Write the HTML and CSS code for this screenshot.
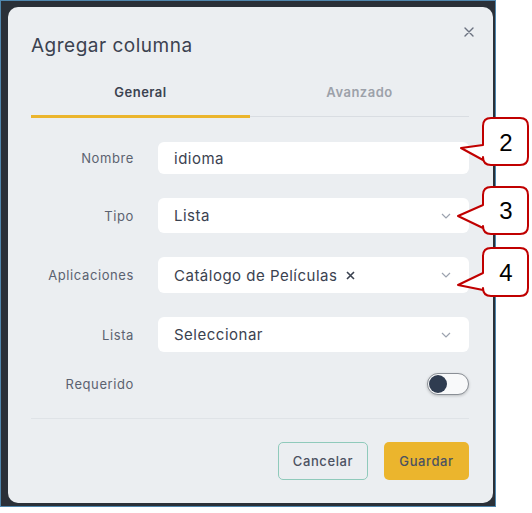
FILE: index.html
```html
<!DOCTYPE html>
<html lang="es">
<head>
<meta charset="utf-8">
<title>Agregar columna</title>
<link rel="stylesheet" href="styles.css">
</head>
<body>
<div class="screen">
  <div class="modal">
    <div class="modal-head">
      <h1 class="title">Agregar columna</h1>
      <button class="close" aria-label="Cerrar">
        <svg width="10" height="10" viewBox="0 0 10 10"><path d="M1 1L9 9M9 1L1 9" stroke="#6b7280" stroke-width="1.4" stroke-linecap="round"/></svg>
      </button>
    </div>
    <div class="tabs">
      <div class="tab active">General</div>
      <div class="tab">Avanzado</div>
    </div>
    <div class="form">
      <label class="label">Nombre</label>
      <div class="field input">idioma</div>

      <label class="label">Tipo</label>
      <div class="field select">Lista
        <svg class="chev" width="10" height="6" viewBox="0 0 10 6"><path d="M1 1L5 5L9 1" fill="none" stroke="#9ca3af" stroke-width="1.2"/></svg>
      </div>

      <label class="label">Aplicaciones</label>
      <div class="field select tall">
        <span class="tag">Catálogo de Películas <svg class="tag-x" width="9" height="9" viewBox="0 0 9 9"><path d="M1 1L8 8M8 1L1 8" stroke="#3b4250" stroke-width="1.6"/></svg></span>
        <svg class="chev" width="10" height="6" viewBox="0 0 10 6"><path d="M1 1L5 5L9 1" fill="none" stroke="#9ca3af" stroke-width="1.2"/></svg>
      </div>

      <label class="label">Lista</label>
      <div class="field select">Seleccionar
        <svg class="chev" width="10" height="6" viewBox="0 0 10 6"><path d="M1 1L5 5L9 1" fill="none" stroke="#9ca3af" stroke-width="1.2"/></svg>
      </div>

      <label class="label last">Requerido</label>
      <div class="toggle-cell last"><span class="toggle"><span class="knob"></span></span></div>
    </div>
    <div class="divider"></div>
    <div class="actions">
      <button class="btn btn-outline">Cancelar</button>
      <button class="btn btn-primary">Guardar</button>
    </div>
  </div>
</div>
<svg class="callouts" width="532" height="513" viewBox="0 0 532 513">
  <g fill="#fff" stroke="#c00000" stroke-width="2" stroke-linejoin="round">
    <path d="M491 118 H520 Q528 118 528 126 V157 Q528 165 520 165 H491 Q483 165 483 157 V160 L461 148 L483 145 V126 Q483 118 491 118 Z"/>
    <path d="M491 187 H520 Q528 187 528 195 V226 Q528 234 520 234 H491 Q483 234 483 226 V228 L458 216 L483 205 V195 Q483 187 491 187 Z"/>
    <path d="M491 248 H520 Q528 248 528 256 V288 Q528 296 520 296 H491 Q483 296 483 288 V290 L458 285 L483 273 V256 Q483 248 491 248 Z"/>
  </g>
  <g font-family="Liberation Sans, Arial, sans-serif" font-size="24" fill="#000" text-anchor="middle">
    <text x="506" y="151">2</text>
    <text x="506" y="219">3</text>
    <text x="506" y="281">4</text>
  </g>
</svg>
</body>
</html>
```

FILE: styles.css
```css
* { box-sizing: border-box; }
html, body { margin: 0; padding: 0; background: #ffffff; }
body {
  width: 532px;
  height: 513px;
  position: relative;
  font-family: "Inter", "Open Sans", sans-serif;
  overflow: hidden;
}
.screen {
  width: 496px;
  height: 507px;
  border: 1px solid #4f86ad;
  background: #2a3038;
  padding: 6px 2px 3px 7px;
}
.modal {
  width: 485px;
  height: 496px;
  background: #ebeef1;
  border-radius: 10px;
  padding: 24px 24px 0 23px;
  display: flex;
  flex-direction: column;
}
.modal-head {
  display: flex;
  justify-content: space-between;
  align-items: flex-start;
  height: 34px;
}
.title {
  margin: 3px 0 0 0;
  font-size: 19px;
  line-height: 24px;
  font-weight: 400;
  color: #3b4250;
  letter-spacing: 0.5px;
}
.close {
  border: 0;
  background: none;
  padding: 0;
  margin: -5px -6px 0 0;
  width: 12px;
  height: 12px;
  display: flex;
  align-items: center;
  justify-content: center;
}
.tabs {
  display: grid;
  grid-template-columns: 1fr 1fr;
  border-bottom: 1px solid #d9dde2;
  margin-top: 11px;
}
.tab {
  text-align: center;
  font-size: 13px;
  font-weight: 600;
  color: #9ca1a9;
  letter-spacing: 0.5px;
  height: 42px;
  padding-top: 8px;
  border-bottom: 3px solid transparent;
  margin-bottom: -2px;
}
.tab.active {
  color: #3b4250;
  border-bottom-color: #ebb52d;
}
.form {
  margin-top: 25px;
  display: grid;
  grid-template-columns: 103px 311px;
  column-gap: 24px;
  row-gap: 24px;
  align-items: center;
}
.form .last { margin-top: -3px; }
.label {
  text-align: right;
  font-size: 13px;
  color: #5b6270;
  letter-spacing: 0.6px;
}
.field {
  background: #ffffff;
  border-radius: 6px;
  height: 35px;
  padding: 0 16px;
  display: flex;
  align-items: center;
  font-size: 15px;
  letter-spacing: 0.5px;
  color: #3b4250;
  position: relative;
}
.field.input { height: 32px; }
.field.tall { height: 36px; }
.select { justify-content: space-between; padding-right: 18px; }
.tag { display: inline-flex; align-items: center; gap: 9px; }
.toggle-cell { display: flex; justify-content: flex-end; }
.toggle {
  width: 42px;
  height: 22px;
  border-radius: 11px;
  background: #f8f9fa;
  border: 1px solid #8a8f96;
  box-shadow: 0 1px 3px rgba(0,0,0,0.2);
  display: flex;
  align-items: center;
  padding: 1px;
}
.knob {
  width: 18px;
  height: 18px;
  border-radius: 50%;
  background: #2f3c50;
}
.divider {
  margin-top: 23px;
  height: 1px;
  background: #dfe3e7;
}
.actions {
  display: flex;
  justify-content: flex-end;
  gap: 16px;
  margin-top: 23px;
}
.btn {
  height: 38px;
  border-radius: 5px;
  font-family: inherit;
  font-size: 13px;
  font-weight: 500;
  letter-spacing: 0.6px;
  color: #4b5261;
}
.btn-outline {
  width: 90px;
  background: transparent;
  border: 1.5px solid #8fcabb;
}
.btn-primary {
  width: 85px;
  background: #ebb52d;
  border: 0;
}
.callouts {
  position: absolute;
  left: 0;
  top: 0;
  pointer-events: none;
}
```
